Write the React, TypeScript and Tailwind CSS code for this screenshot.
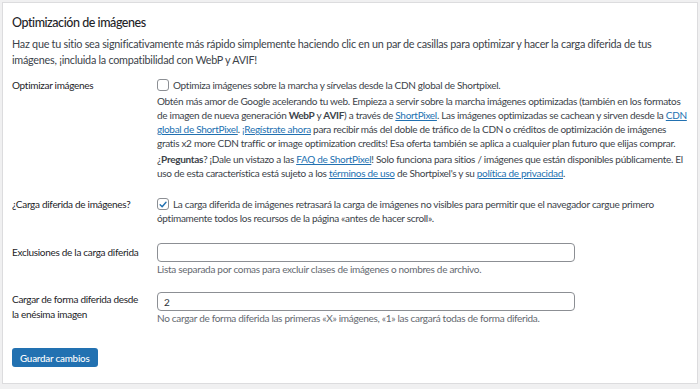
import React from "react";

const font = { fontFamily: 'Lato, "Open Sans", sans-serif' };

function Link({ children }: { children: React.ReactNode }) {
  return <a className="text-[#2271b1] underline">{children}</a>;
}

function Checkbox({ checked }: { checked?: boolean }) {
  return (
    <span className="mr-[4px] inline-flex size-[12px] shrink-0 translate-y-[1px] items-center justify-center rounded-[3px] border border-[#8c8f94] bg-white align-top">
      {checked && (
        <svg viewBox="0 0 12 12" className="size-[11px]">
          <path d="M2.6 6.2 L5 8.6 L9.6 3.4" fill="none" stroke="#2271b1" strokeWidth="1.7" strokeLinecap="round" strokeLinejoin="round" />
        </svg>
      )}
    </span>
  );
}

function Row({ label, children, className }: { label: React.ReactNode; children: React.ReactNode; className?: string }) {
  return (
    <div className={"grid grid-cols-[145px_1fr] " + (className ?? "")}>
      <div className="text-[#1d2327]">{label}</div>
      <div>{children}</div>
    </div>
  );
}

export default function App() {
  return (
    <div className="h-[389px] w-[700px] bg-[#f0f0f1] p-[2px] text-[10px] leading-[14px] tracking-[-0.3px] text-[#3c434a]" style={font}>
      <div className="w-[696px] border border-[#dcdcde] bg-white px-[9px] pb-[16px] pt-[11px]">
        <h2 className="text-[12.5px] leading-[18px] font-medium tracking-[-0.45px] text-[#1d2327]">Optimización de imágenes</h2>
        <p className="mt-[4px] whitespace-nowrap text-[10.8px] leading-[16px] tracking-[-0.25px] text-[#3c434a]">
          Haz que tu sitio sea significativamente más rápido simplemente haciendo clic en un par de casillas para optimizar y hacer la carga diferida de tus
          <br />
          imágenes, ¡incluida la compatibilidad con WebP y AVIF!
        </p>

        <Row label="Optimizar imágenes" className="mt-[10px]">
          <div className="whitespace-nowrap">
            <div>
              <Checkbox />
              Optimiza imágenes sobre la marcha y sírvelas desde la CDN global de Shortpixel.
            </div>
            <p className="mt-[2px]">
              Obtén más amor de Google acelerando tu web. Empieza a servir sobre la marcha imágenes optimizadas (también en los formatos
              <br />
              de imagen de nueva generación <b className="font-bold">WebP</b> y <b className="font-bold">AVIF</b>) a través de <Link>ShortPixel</Link>. Las imágenes optimizadas se cachean y sirven desde la <Link>CDN</Link>
              <br />
              <Link>global de ShortPixel</Link>. <Link>¡Regístrate ahora</Link> para recibir más del doble de tráfico de la CDN o créditos de optimización de imágenes
              <br />
              gratis x2 more CDN traffic or image optimization credits! Esa oferta también se aplica a cualquier plan futuro que elijas comprar.
            </p>
            <p className="mt-[2px]">
              ¿<b className="font-bold">Preguntas</b>? ¡Dale un vistazo a las <Link>FAQ de ShortPixel</Link>! Solo funciona para sitios / imágenes que están disponibles públicamente. El
              <br />
              uso de esta característica está sujeto a los <Link>términos de uso</Link> de Shortpixel's y su <Link>política de privacidad</Link>.
            </p>
          </div>
        </Row>

        <Row label="¿Carga diferida de imágenes?" className="mt-[17px]">
          <div className="whitespace-nowrap">
            <Checkbox checked />
            La carga diferida de imágenes retrasará la carga de imágenes no visibles para permitir que el navegador cargue primero
            <br />
            óptimamente todos los recursos de la página «antes de hacer scroll».
          </div>
        </Row>

        <Row label={<div className="pt-[2px]">Exclusiones de la carga diferida</div>} className="mt-[18px]">
          <input className="block h-[19px] w-[418px] rounded-[4px] border border-[#8c8f94] px-[6px] text-[10px] text-[#2c3338] outline-none" />
          <div className="text-[#646970]">Lista separada por comas para excluir clases de imágenes o nombres de archivo.</div>
        </Row>

        <Row
          label={
            <div className="leading-[15px]">
              Cargar de forma diferida desde
              <br />
              la enésima imagen
            </div>
          }
          className="mt-[16px]"
        >
          <input defaultValue="2" className="block h-[19px] w-[418px] rounded-[4px] border border-[#8c8f94] px-[6px] text-[10px] text-[#2c3338] outline-none" />
          <div className="text-[#646970]">No cargar de forma diferida las primeras «X» imágenes, «1» las cargará todas de forma diferida.</div>
        </Row>

        <button className="mt-[23px] block h-[19px] rounded-[3px] bg-[#2271b1] px-[8px] text-[9.8px] font-medium tracking-[-0.2px] text-white">Guardar cambios</button>
      </div>
    </div>
  );
}
